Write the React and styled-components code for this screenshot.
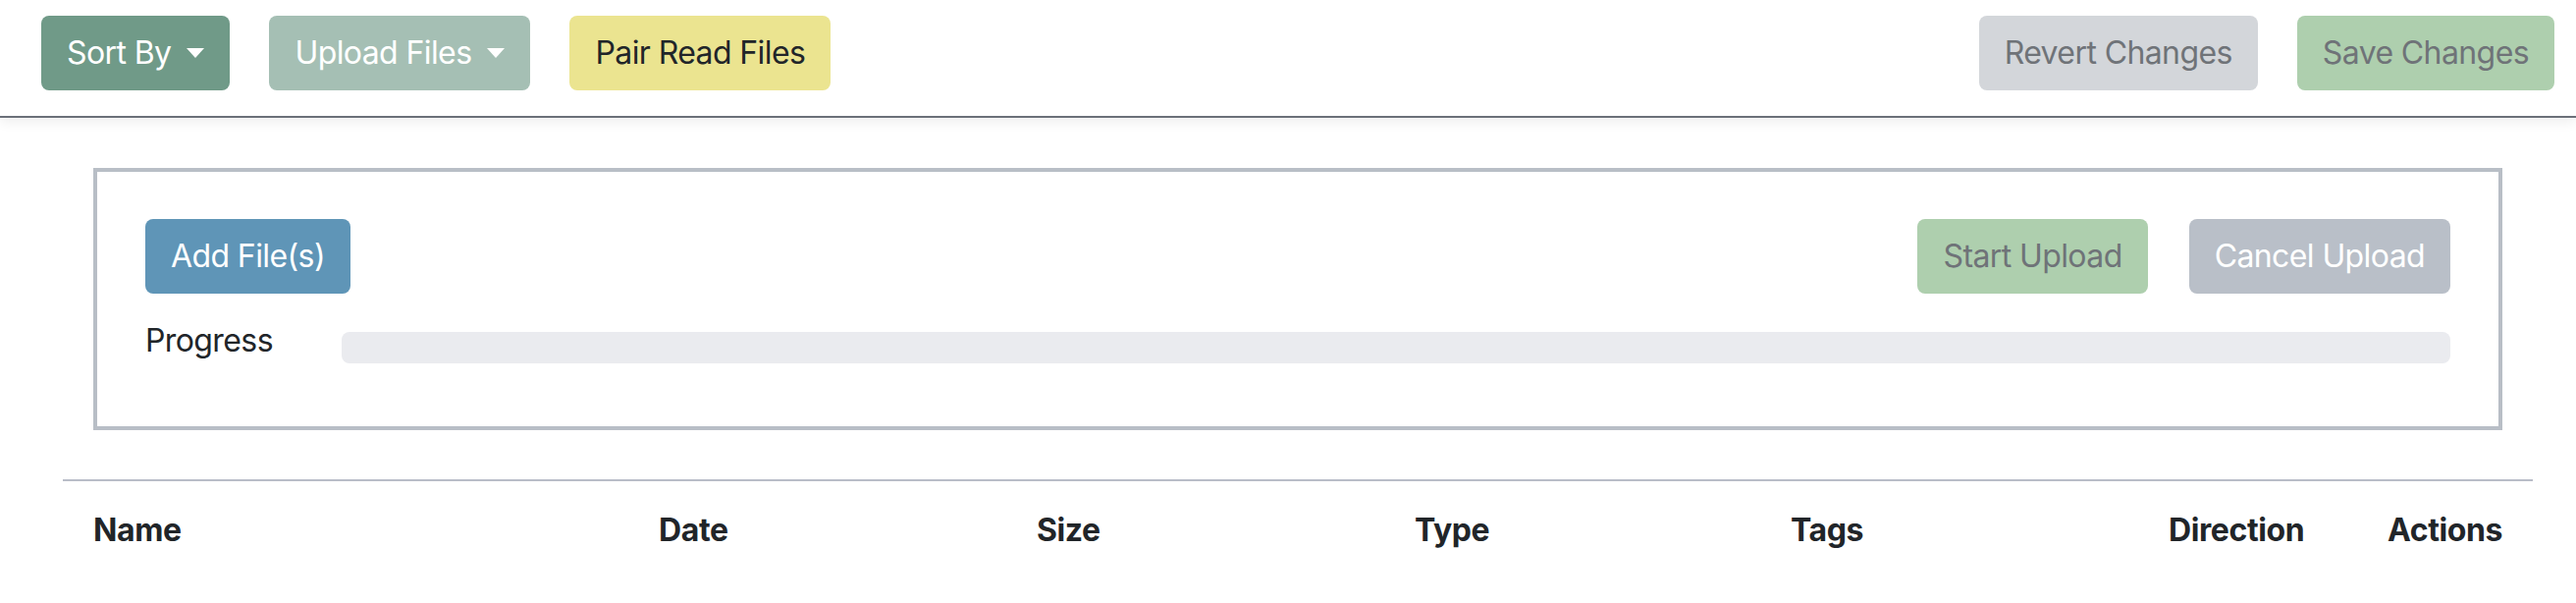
import React from "react";
import styled, { createGlobalStyle } from "styled-components";

const GlobalStyle = createGlobalStyle`
  body {
    margin: 0;
    background: #fff;
    font-family: Inter, "Liberation Sans", sans-serif;
    color: #212529;
  }
  * { box-sizing: border-box; }
`;

const TopBar = styled.div`
  display: flex;
  align-items: flex-start;
  justify-content: space-between;
  height: 120px;
  padding: 16px 22px 0 42px;
  border-bottom: 2px solid #6b7079;
  box-shadow: 0 4px 12px rgba(0, 0, 0, 0.07);
`;

const Group = styled.div`
  display: flex;
  gap: 40px;
`;

const Button = styled.button`
  display: inline-flex;
  align-items: center;
  height: 76px;
  padding: 0 26px;
  border: 0;
  border-radius: 8px;
  font-family: inherit;
  font-size: 32px;
  line-height: 48px;
  letter-spacing: -0.6px;
  background: ${(p) => p.$bg};
  color: ${(p) => p.$color || "#fff"};
  white-space: nowrap;
`;

const Caret = styled.span`
  display: inline-block;
  margin-left: 16px;
  border-top: 10px solid currentColor;
  border-left: 9px solid transparent;
  border-right: 9px solid transparent;
`;

const Content = styled.div`
  padding: 51px 44px 0 64px;
`;

const UploadPanel = styled.div`
  margin: 0 31px;
  border: 4px solid #b8bec6;
  padding: 48px 49px 63px 49px;
`;

const ButtonRow = styled.div`
  display: flex;
  justify-content: space-between;
`;

const Actions = styled.div`
  display: flex;
  gap: 42px;
`;

const ProgressRow = styled.div`
  display: flex;
  align-items: flex-start;
  margin-top: 24px;
  height: 48px;
`;

const Label = styled.div`
  width: 200px;
  font-size: 32px;
  line-height: 48px;
  letter-spacing: -0.6px;
  color: #212529;
`;

const Bar = styled.div`
  flex: 1;
  height: 32px;
  margin-top: 15px;
  border-radius: 8px;
  background: #eaebef;
`;

const Rule = styled.hr`
  margin: 50px 0 0;
  border: 0;
  border-top: 2px solid #b9bdc8;
`;

const HeaderRow = styled.div`
  display: grid;
  grid-template-columns: 576px 385px 385px 383px 385px 223px auto;
  margin: 0 31px;
  padding-top: 26px;
`;

const Th = styled.div`
  font-size: 32px;
  font-weight: 700;
  line-height: 48px;
  letter-spacing: -0.4px;
  color: #212529;
`;

const columns = ["Name", "Date", "Size", "Type", "Tags", "Direction", "Actions"];

export default function App() {
  return (
    <>
      <GlobalStyle />
      <TopBar>
        <Group>
          <Button $bg="#709a88">
            Sort By <Caret />
          </Button>
          <Button $bg="#a5bfb4">
            Upload Files <Caret />
          </Button>
          <Button $bg="#ebe490" $color="#212529">
            Pair Read Files
          </Button>
        </Group>
        <Group>
          <Button $bg="#d3d6da" $color="#6f7378">
            Revert Changes
          </Button>
          <Button $bg="#aecfae" $color="#6f7378">
            Save Changes
          </Button>
        </Group>
      </TopBar>
      <Content>
        <UploadPanel>
          <ButtonRow>
            <Button $bg="#5f95b7">Add File(s)</Button>
            <Actions>
              <Button $bg="#aecfae" $color="#6f7378">
                Start Upload
              </Button>
              <Button $bg="#b9bfc8">Cancel Upload</Button>
            </Actions>
          </ButtonRow>
          <ProgressRow>
            <Label>Progress</Label>
            <Bar />
          </ProgressRow>
        </UploadPanel>
        <Rule />
        <HeaderRow>
          {columns.map((c) => (
            <Th key={c}>{c}</Th>
          ))}
        </HeaderRow>
      </Content>
    </>
  );
}
